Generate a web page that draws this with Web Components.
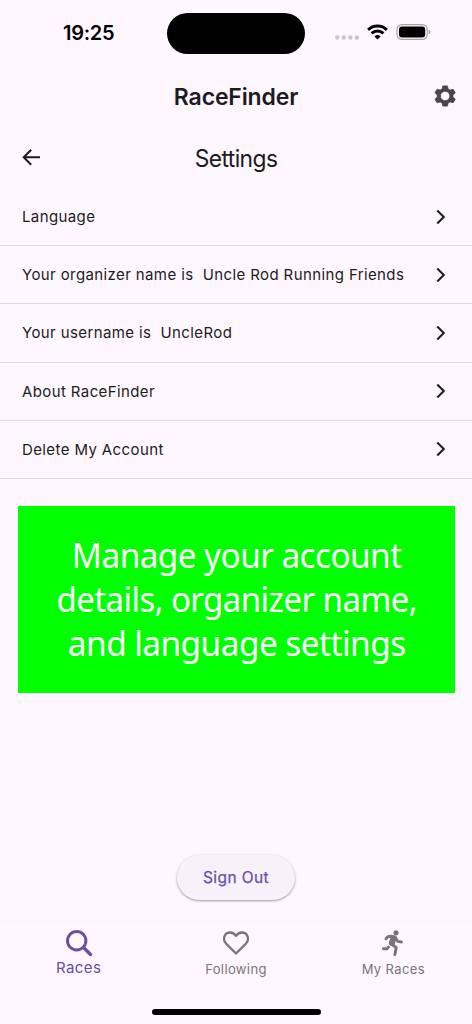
<!DOCTYPE html>
<html lang="en"><head><meta charset="utf-8"><title>RaceFinder</title>
<style>html,body{margin:0;padding:0;background:#fef7ff}body{width:472px;height:1024px;overflow:hidden;font-family:Inter,"Liberation Sans",sans-serif;color:#1d1b20}</style></head>
<body>
<race-app></race-app>
<script>
const define=(name,html)=>{
  const t=document.createElement('template');t.innerHTML=html;
  customElements.define(name,class extends HTMLElement{
    constructor(){super();this.attachShadow({mode:'open'}).append(t.content.cloneNode(true));}
  });
};
define('status-bar',`<style>
:host{display:grid;grid-template-columns:167px 138px 1fr;height:66px;align-items:center;color:#000}
time{font-size:20px;font-weight:600;letter-spacing:-.3px;padding-left:63px;line-height:24px}
.island{height:41px;border-radius:21px;background:#000}
svg{display:block}
</style><time>19:25</time><div class="island"></div>
<svg width="167" height="40" viewBox="305 13 167 40">
<g fill="#cbc5cc"><circle cx="337.2" cy="37.5" r="2.2"/><circle cx="343.8" cy="37.5" r="2.2"/><circle cx="350.3" cy="37.5" r="2.2"/><circle cx="356.8" cy="37.5" r="2.2"/></g>
<g fill="none" stroke="#000" stroke-width="2.9"><path d="M368.1 29.9a13.4 13.4 0 0 1 18.8 0M371.6 33.4a8.5 8.5 0 0 1 11.8 0"/></g>
<path d="M377.5 39.6l-3.1-3.2a4.5 4.5 0 0 1 6.2 0z"/>
<rect x="397" y="24.6" width="30.2" height="14.8" rx="4.8" fill="none" stroke="#a8a2a9" stroke-width="1.2"/>
<rect x="399" y="26.6" width="26.2" height="10.8" rx="3"/><path d="M428.7 29.5q1.8.8 1.8 2.5t-1.8 2.5z" fill="#a8a2a9"/></svg>`);
define('app-header',`<style>
:host{display:grid;grid-template-columns:54px 1fr 54px;height:60px;align-items:center}
h1{grid-column:2;margin:0;padding-top:1px;text-align:center;font-size:23px;line-height:28px;font-weight:600;letter-spacing:-.15px}
svg{display:block;margin-left:14px}
</style><h1>RaceFinder</h1>
<svg width="27" height="26" viewBox="-13 -13 27 26"><path fill="#49454f" stroke="#49454f" stroke-width=".8" stroke-linejoin="round" fill-rule="evenodd" d="M-2.2-10.1h4.600l.6 3 2.100 1.200 3-.9 2.200 3.600-2.300 2v2.400l2.300 2-2.200 3.600-3-.9-2.100 1.200-.6 3h-4.600l-.6-3-2.100-1.200-3 .9-2.200-3.600 2.300-2v-2.400l-2.300-2 2.200-3.600 3 .9 2.100-1.200zM.1-4.700a4.700 4.700 0 1 0 .01 0z"/></svg>`);
define('page-title',`<style>
:host{display:grid;grid-template-columns:62px 1fr 62px;height:62px;align-items:center}
h2{margin:0;padding-top:3px;text-align:center;font-size:24px;line-height:30px;font-weight:400;letter-spacing:-.6px;transform:scaleX(.95)}
svg{display:block;margin-left:18px}
</style><svg width="26" height="26" viewBox="18 144 26 26"><path d="M40 157.300H24M31.200 149.800l-7.500 7.500 7.500 7.500" fill="none" stroke="#1d1b20" stroke-width="2"/></svg><h2><slot></slot></h2>`);
define('setting-row',`<style>
:host{display:flex;box-sizing:border-box;height:58.2px;align-items:center;justify-content:space-between;padding:1px 23px 0 22px;border-bottom:1px solid #dfdce1;font-size:15px;letter-spacing:.39px;white-space:pre;line-height:20px}
svg{display:block;margin-top:-1px}
</style><span><slot></slot></span><svg width="16" height="20" viewBox="-8 -10 16 20"><path d="M-3.700-6.500L2.800 0l-6.500 6.500" fill="none" stroke="#1d1b20" stroke-width="2"/></svg>`);
define('promo-banner',`<style>
:host{display:flex;flex-direction:column;box-sizing:border-box;width:437.5px;height:187px;margin:27px 0 0 17.5px;padding-top:27px;background:#0f0;color:#fff;font:400 34.5px/43.8px "Noto Sans","Open Sans",sans-serif;letter-spacing:-.6px;text-align:center;white-space:nowrap}
.a{transform:scaleX(.967)}.b{transform:scaleX(.957)}.c{transform:scaleX(.97)}
</style><span class="a">Manage your account</span><span class="b">details, organizer name,</span><span class="c">and language settings</span>`);
define('pill-button',`<style>
:host{display:block}
button{display:block;box-sizing:border-box;width:118px;height:45px;border:0;border-radius:23px;padding:1px 0 0;background:#f7f2fa;color:#6750a4;font:400 15.500px/20px Inter,sans-serif;-webkit-text-stroke:.25px #6750a4;letter-spacing:.4px;box-shadow:0 1px 2px #0000004d,0 1px 3px 1px #00000012}
</style><button><slot></slot></button>`);
define('nav-item',`<style>
:host{display:flex;flex:1;flex-direction:column;align-items:center;color:#79747b;font-size:13px;letter-spacing:.38px;line-height:18px;padding-top:4px}
:host([active]){color:#6750a4;font-size:15px;letter-spacing:.4px}
.l{margin-top:2px}
:host([active]) .l{margin-top:1px}
</style><slot name="icon"></slot><span class="l"><slot></slot></span>`);
define('race-app',`<style>
:host{display:flex;flex-direction:column;height:1024px;width:472px}
.list{display:flex;flex-direction:column}
.action{flex:1;display:flex;justify-content:center;align-items:flex-end;padding-bottom:21px}
nav{display:flex;height:88px;box-sizing:border-box;border-top:1px solid #fbf4fc;padding-top:2px}
nav svg{display:block}
.home{display:flex;justify-content:center;height:15px}
.home i{width:169px;height:5.6px;border-radius:3px;background:#000}
</style>
<status-bar></status-bar><app-header></app-header><page-title>Settings</page-title>
<div class="list"><setting-row>Language</setting-row><setting-row>Your organizer name is  Uncle Rod Running Friends</setting-row><setting-row>Your username is  UncleRod</setting-row><setting-row>About RaceFinder</setting-row><setting-row>Delete My Account</setting-row></div>
<promo-banner></promo-banner>
<div class="action"><pill-button>Sign Out</pill-button></div>
<nav>
<nav-item active><svg slot="icon" width="30" height="30" viewBox="-15 -15 30 30"><g fill="none" stroke="#6750a4" stroke-width="3"><circle cx="-2.3" cy="-2.3" r="9.2"/><path d="M4.500 4.500l7 7" stroke-width="3.400" stroke-linecap="round"/></g></svg>Races</nav-item>
<nav-item><svg slot="icon" width="30" height="30" viewBox="-15 -15 30 30"><path d="M0 10.500L-10 .6C-14-3.800-11.400-10.500-6-10.500c2.600 0 4.600 1.300 6 3.400 1.400-2.100 3.400-3.400 6-3.400 5.400 0 8 6.700 4 11.100z" fill="none" stroke="#79747b" stroke-width="2.3" stroke-linejoin="round"/></svg>Following</nav-item>
<nav-item><svg slot="icon" width="30" height="30" viewBox="378 928 30 30"><g fill="none" stroke="#79747b" stroke-width="2.9" stroke-linecap="round" stroke-linejoin="round"><circle cx="396" cy="932.800" r="2.600" fill="#79747b" stroke="none"/><path d="M386 938.800l1.800-2 3.400-.6 4.200 1.200 2.300 4 3.800.6"/><path d="M393.500 938.300l-1.600 4.700" stroke-width="6"/><path d="M392 944.500l4.200 3-1.300 7M388.500 947l-1.500 1.800h-3.600"/></g></svg>My Races</nav-item>
</nav>
<div class="home"><i></i></div>`);
</script></body></html>
